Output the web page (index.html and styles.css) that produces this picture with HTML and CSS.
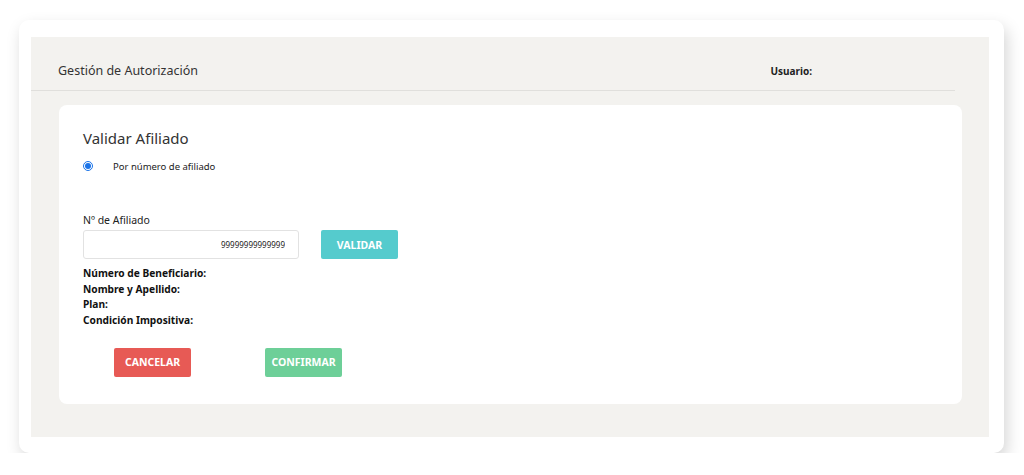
FILE: index.html
```html
<!DOCTYPE html>
<html lang="es">
<head>
<meta charset="utf-8">
<title>Gestión de Autorización</title>
<link rel="stylesheet" href="styles.css">
</head>
<body>
<div class="frame">
  <div class="panel">
    <header class="panel-head">
      <span class="panel-title">Gestión de Autorización</span>
      <span class="panel-user">Usuario:</span>
    </header>
    <section class="card">
      <h1 class="card-title">Validar Afiliado</h1>
      <label class="radio-row">
        <input type="radio" name="modo" checked>
        <span>Por número de afiliado</span>
      </label>
      <div class="field">
        <label class="field-label" for="afiliado">Nº de Afiliado</label>
        <div class="field-row">
          <input id="afiliado" class="field-input" type="text" value="99999999999999">
          <button class="btn btn-validar" type="button">VALIDAR</button>
        </div>
      </div>
      <ul class="info">
        <li>Número de Beneficiario:</li>
        <li>Nombre y Apellido:</li>
        <li>Plan:</li>
        <li>Condición Impositiva:</li>
      </ul>
      <div class="actions">
        <button class="btn btn-cancel" type="button">CANCELAR</button>
        <button class="btn btn-confirm" type="button">CONFIRMAR</button>
      </div>
    </section>
  </div>
</div>
</body>
</html>
```

FILE: styles.css
```css
* { box-sizing: border-box; }

body {
  margin: 0;
  background: #ffffff;
  font-family: "Noto Sans", "Open Sans", sans-serif;
  color: #222;
}

.frame {
  margin: 20px 0 0 19px;
  width: 985px;
  height: 433px;
  padding: 17px 15px 16px 12px;
  background: #fff;
  border-radius: 10px;
  box-shadow: 3px 7px 16px rgba(0, 0, 0, 0.17);
}

.panel {
  height: 100%;
  background: #f3f2ef;
  padding-top: 1px;
}

.panel-head {
  width: 924px;
  height: 54px;
  margin-top: -1px;
  display: flex;
  align-items: center;
  justify-content: space-between;
  padding: 14px 143px 0 27px;
  border-bottom: 1px solid #e0dfdc;
}

.panel-title {
  font-size: 12.5px;
  color: #333;
}

.panel-user {
  font-size: 10px;
  font-weight: 700;
  color: #222;
}

.card {
  margin: 14px 0 0 28px;
  width: 903px;
  height: 299px;
  background: #fff;
  border-radius: 8px;
  padding: 22px 24px 0;
}

.card-title {
  margin: 0;
  font-size: 15px;
  font-weight: 400;
  line-height: 22px;
  color: #333;
}

.radio-row {
  display: flex;
  align-items: center;
  margin-top: 9px;
  height: 16px;
  font-size: 9.5px;
  color: #222;
}

.radio-row input {
  width: 10px;
  height: 10px;
  margin: 0 20px 0 0;
  accent-color: #1a73e8;
}

.field {
  margin-top: 39px;
}

.field-label {
  display: block;
  font-size: 10.5px;
  line-height: 14px;
  color: #222;
}

.field-row {
  display: flex;
  align-items: center;
  gap: 22px;
  margin-top: 3px;
}

.field-input {
  width: 216px;
  height: 29px;
  border: 1px solid #e2e2e2;
  border-radius: 3px;
  padding: 0 13px 0 8px;
  text-align: right;
  font-family: inherit;
  font-size: 8px;
  color: #222;
}

.btn {
  border: 0;
  border-radius: 2px;
  color: #fff;
  font-family: inherit;
  font-weight: 700;
  font-size: 10.5px;
  width: 77px;
  height: 29px;
  padding: 0;
}

.btn-validar { background: #55cbcd; }
.btn-cancel { background: #e75a55; }
.btn-confirm { background: #6dcf98; }

.info {
  list-style: none;
  margin: 7px 0 0;
  padding: 0;
  font-size: 10.2px;
  font-weight: 700;
  line-height: 15.7px;
  color: #111;
}

.actions {
  display: flex;
  gap: 74px;
  margin: 19px 0 0 31px;
}
```
